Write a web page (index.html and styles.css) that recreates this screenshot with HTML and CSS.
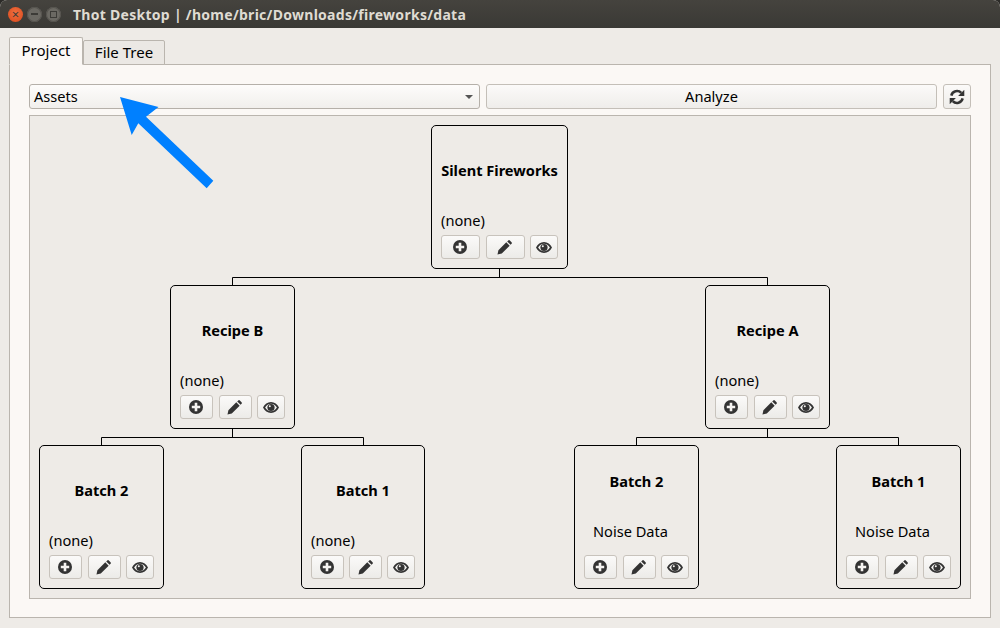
FILE: index.html
```html
<!DOCTYPE html>
<html>
<head>
<meta charset="utf-8">
<title>Thot Desktop</title>
<link rel="stylesheet" href="styles.css">
</head>
<body>
<svg width="0" height="0" class="defs">
  <symbol id="i-add" viewBox="0 0 14 14"><circle cx="7" cy="7" r="7" fill="#333"/><path d="M5.700 2.800h2.600v2.900h2.900v2.600H8.300v2.900H5.700V8.300H2.800V5.700h2.900z" fill="#f5f3f1"/></symbol>
  <symbol id="i-edit" viewBox="0 0 16 16"><path d="M0.500 15.500l1-4.600 8.400-8.400 3.600 3.600-8.400 8.400zM10.900 1.500l1.100-1a1.200 1.200 0 0 1 1.700 0l1.800 1.800a1.200 1.200 0 0 1 0 1.700l-1 1.100z" fill="#333"/></symbol>
  <symbol id="i-eye" viewBox="0 0 16 11"><path fill-rule="evenodd" d="M8 0c3.500 0 6.400 2.200 8 5.500C14.400 8.800 11.500 11 8 11S1.600 8.800 0 5.500C1.600 2.200 4.500 0 8 0zM8 1.800c-2.400 0-4.600 1.400-5.900 3.700C3.400 7.800 5.600 9.200 8 9.200s4.600-1.400 5.900-3.700C12.600 3.200 10.400 1.800 8 1.800z" fill="#333"/><circle cx="8" cy="5.500" r="3.600" fill="#333"/><circle cx="6.800" cy="4.300" r="1" fill="#f5f3f1"/></symbol>
</svg>
<div class="window">
  <header class="titlebar">
    <div class="controls">
      <span class="ctl close">×</span>
      <span class="ctl min"><i class="dash"></i></span>
      <span class="ctl max"><i class="square"></i></span>
    </div>
    <span class="title">Thot Desktop | /home/bric/Downloads/fireworks/data</span>
  </header>
  <main class="content">
    <div class="tabs">
      <div class="tab active">Project</div>
      <div class="tab">File Tree</div>
    </div>
    <section class="panel">
      <div class="toolbar">
        <div class="combo"><span>Assets</span><i class="caret"></i></div>
        <button class="btn analyze">Analyze</button>
        <button class="btn refresh">
          <svg viewBox="0 0 16 16" width="16" height="16"><path d="M2.300 6.600A5.900 5.900 0 0 1 12.300 3.900M13.700 9.400A5.900 5.900 0 0 1 3.700 12.100" fill="none" stroke="#333" stroke-width="2.500"/><path d="M15.300 0.800V7H9.100zM0.700 15.200V9H6.900z" fill="#333"/></svg>
        </button>
      </div>
      <div class="canvas">
        <svg class="links" width="942" height="484" viewBox="0 0 942 484">
          <path d="M470.500 154V162.500M203.500 162.500H738.500M203.500 162.500V170M738.500 162.500V170M203.500 314V322.500M72.500 322.500H334.500M72.500 322.500V330M334.500 322.500V330M738.500 314V322.500M607.500 322.500H869.500M607.500 322.500V330M869.500 322.500V330" stroke="#000" fill="none"/>
        </svg>

        <article class="node n-root wide">
          <h3 class="name">Silent Fireworks</h3>
          <p class="type">(none)</p>
          <div class="actions">
            <button class="act"><svg class="ic-add"><use href="#i-add"/></svg></button>
            <button class="act"><svg class="ic-edit"><use href="#i-edit"/></svg></button>
            <button class="act small"><svg class="ic-eye"><use href="#i-eye"/></svg></button>
          </div>
        </article>

        <article class="node n-rb">
          <h3 class="name">Recipe B</h3>
          <p class="type">(none)</p>
          <div class="actions">
            <button class="act"><svg class="ic-add"><use href="#i-add"/></svg></button>
            <button class="act"><svg class="ic-edit"><use href="#i-edit"/></svg></button>
            <button class="act small"><svg class="ic-eye"><use href="#i-eye"/></svg></button>
          </div>
        </article>

        <article class="node n-ra">
          <h3 class="name">Recipe A</h3>
          <p class="type">(none)</p>
          <div class="actions">
            <button class="act"><svg class="ic-add"><use href="#i-add"/></svg></button>
            <button class="act"><svg class="ic-edit"><use href="#i-edit"/></svg></button>
            <button class="act small"><svg class="ic-eye"><use href="#i-eye"/></svg></button>
          </div>
        </article>

        <article class="node n-b2l">
          <h3 class="name">Batch 2</h3>
          <p class="type">(none)</p>
          <div class="actions">
            <button class="act"><svg class="ic-add"><use href="#i-add"/></svg></button>
            <button class="act"><svg class="ic-edit"><use href="#i-edit"/></svg></button>
            <button class="act small"><svg class="ic-eye"><use href="#i-eye"/></svg></button>
          </div>
        </article>

        <article class="node n-b1l">
          <h3 class="name">Batch 1</h3>
          <p class="type">(none)</p>
          <div class="actions">
            <button class="act"><svg class="ic-add"><use href="#i-add"/></svg></button>
            <button class="act"><svg class="ic-edit"><use href="#i-edit"/></svg></button>
            <button class="act small"><svg class="ic-eye"><use href="#i-eye"/></svg></button>
          </div>
        </article>

        <article class="node n-b2r data">
          <h3 class="name">Batch 2</h3>
          <p class="type">Noise Data</p>
          <div class="actions">
            <button class="act"><svg class="ic-add"><use href="#i-add"/></svg></button>
            <button class="act"><svg class="ic-edit"><use href="#i-edit"/></svg></button>
            <button class="act small"><svg class="ic-eye"><use href="#i-eye"/></svg></button>
          </div>
        </article>

        <article class="node n-b1r data">
          <h3 class="name">Batch 1</h3>
          <p class="type">Noise Data</p>
          <div class="actions">
            <button class="act"><svg class="ic-add"><use href="#i-add"/></svg></button>
            <button class="act"><svg class="ic-edit"><use href="#i-edit"/></svg></button>
            <button class="act small"><svg class="ic-eye"><use href="#i-eye"/></svg></button>
          </div>
        </article>
      </div>
    </section>
  </main>
</div>
<svg class="arrow" width="96" height="94" viewBox="0 0 96 94">
  <path d="M0 0L38.500 10 26 19.700 93.300 83.700 86.700 91.300 18.300 26.300 11.700 38z" fill="#0080ff"/>
</svg>
</body>
</html>
```

FILE: styles.css
```css
* { box-sizing: border-box; }
html, body { margin: 0; padding: 0; }
body {
  width: 1000px;
  height: 628px;
  overflow: hidden;
  background: #2c2b28;
  font-family: "Noto Sans", "Open Sans", sans-serif;
  font-size: 14.6px;
  color: #000;
  position: relative;
}
.defs { position: absolute; }
.window {
  width: 1000px;
  height: 628px;
  display: flex;
  flex-direction: column;
  border-radius: 7px 7px 0 0;
  overflow: hidden;
  background: #eeebe7;
}
.titlebar {
  height: 28px;
  flex: none;
  display: flex;
  align-items: center;
  padding-left: 8px;
  background: linear-gradient(#45433e, #3a3935);
}
.controls { display: flex; gap: 4px; width: 65px; flex: none; }
.ctl {
  width: 15px;
  height: 15px;
  border-radius: 50%;
  display: flex;
  align-items: center;
  justify-content: center;
  background: #6b6963;
  box-shadow: inset 0 0 0 1px #55534e;
}
.close {
  background: radial-gradient(circle at 50% 40%, #f0703f, #d9481c);
  color: #3c3b37;
  font-size: 13px;
  line-height: 15px;
  box-shadow: none;
}
.dash { width: 7px; height: 2px; background: #3c3b37; }
.square { width: 7px; height: 7px; border: 1px solid #3c3b37; }
.title {
  color: #dfdbd2;
  font-weight: 700;
  font-size: 14px;
  letter-spacing: 0.28px;
  white-space: nowrap;
}
.content {
  flex: 1;
  padding: 9px 9px 10px 9px;
  display: flex;
  flex-direction: column;
  min-height: 0;
}
.tabs { display: flex; align-items: flex-end; height: 28px; flex: none; position: relative; z-index: 1; margin-bottom: -1px; }
.tab {
  height: 25px;
  width: 82px;
  padding-bottom: 2px;
  display: flex;
  align-items: center;
  justify-content: center;
  background: #ebe8e4;
  border: 1px solid #bab5ae;
  border-radius: 2px 2px 0 0;
  font-size: 15px;
}
.tab.active {
  height: 28px;
  width: 74px;
  background: #fbf8f5;
  border-bottom-color: #fbf8f5;
}
.panel {
  flex: 1;
  border: 1px solid #bab5ae;
  background: #fbf8f5;
  padding: 19px 19px 18px 19px;
  display: flex;
  flex-direction: column;
  min-height: 0;
}
.toolbar { display: flex; gap: 6px; height: 25px; flex: none; margin-bottom: 6px; }
.combo {
  width: 451px;
  border: 1px solid #b5b0a9;
  border-radius: 3px;
  background: linear-gradient(#fdfcfb, #f1efec);
  display: flex;
  align-items: center;
  justify-content: space-between;
  padding: 0 6px 2px 4px;
}
.caret {
  width: 0; height: 0;
  margin-top: 2px;
  border-left: 4px solid transparent;
  border-right: 4px solid transparent;
  border-top: 4px solid #555;
}
.btn {
  border: 1px solid #c4bfb8;
  border-radius: 3px;
  background: linear-gradient(#fbfaf9, #efedea);
  font: inherit;
  color: #000;
  padding: 0;
  display: flex;
  align-items: center;
  justify-content: center;
}
.analyze { width: 451px; padding-bottom: 2px; }
.refresh { width: 28px; }
.canvas {
  flex: 1;
  position: relative;
  border: 1px solid #bab5ae;
  background: #eeebe7;
}
.links { position: absolute; left: 0; top: 0; margin: -1px 0 0 -1px; }
.node {
  position: absolute;
  width: 125px;
  height: 144px;
  border: 1px solid #000;
  border-radius: 5px;
  background: #eeebe7;
  padding: 0 9px 9px 9px;
  display: flex;
  flex-direction: column;
}
.name {
  margin: 0;
  height: 86px;
  flex: none;
  font-size: 14.6px;
  font-weight: 700;
  text-align: center;
  line-height: 88px;
  white-space: nowrap;
}
.type { margin: 0; height: 20px; line-height: 16px; flex: none; white-space: nowrap; }
.data .name { height: 66px; line-height: 70px; }
.data .type { height: 40px; line-height: 38px; padding-left: 9px; }
.actions { display: flex; justify-content: space-between; margin-top: 3px; }
.act {
  width: 33px;
  height: 24px;
  border: 1px solid #c8c3bc;
  border-radius: 3px;
  background: linear-gradient(#fbfaf9, #ecebe8);
  padding: 0;
  display: flex;
  align-items: center;
  justify-content: center;
}
.wide { width: 137px; }
.wide .act { width: 39px; }
.wide .act.small { width: 28px; }
.act.small { width: 28px; }
.ic-add { width: 14px; height: 14px; margin-right: 1px; }
.ic-edit { width: 15px; height: 15px; margin-right: 1px; }
.ic-eye { width: 16px; height: 11px; }
.n-root { left: 401px; top: 9px; }
.n-rb { left: 140px; top: 169px; }
.n-ra { left: 675px; top: 169px; }
.n-b2l { left: 9px; top: 329px; }
.n-b1l { left: 271px; top: 329px; width: 124px; }
.n-b2r { left: 544px; top: 329px; }
.n-b1r { left: 806px; top: 329px; }
.arrow { position: absolute; left: 120px; top: 97px; }
```
